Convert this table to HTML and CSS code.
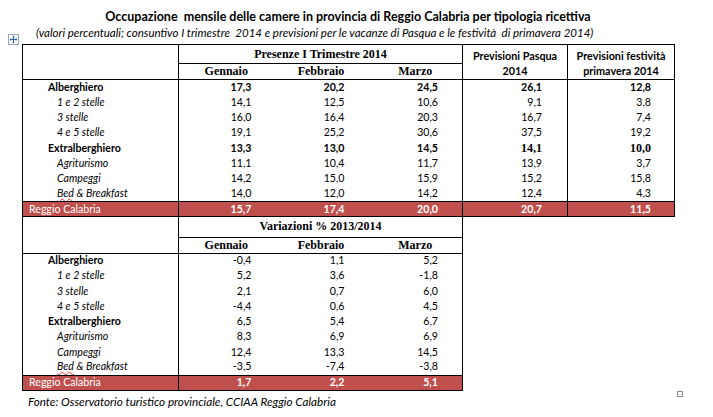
FILE: index.html
```html
<!DOCTYPE html>
<html lang="it">
<head>
<meta charset="utf-8">
<title>Occupazione mensile delle camere</title>
<link rel="stylesheet" href="styles.css">
</head>
<body>
<div class="page">
  <h1 class="title">Occupazione&nbsp; mensile delle camere in provincia di Reggio Calabria per tipologia ricettiva</h1>
  <p class="subtitle">(valori percentuali; consuntivo I trimestre&nbsp; 2014 e previsioni per le vacanze di Pasqua e le festività&nbsp; di primavera 2014)</p>
  <div class="tables">
    <span class="handle"><svg viewBox="0 0 11 11" width="11" height="11"><rect x="0.5" y="0.5" width="10" height="10" fill="#fff" stroke="#9aa6c0"/><path d="M5.5 2v7M2 5.5h7" stroke="#2f5fa8" stroke-width="1"/><path d="M5.5 1.6l-1.4 1.6h2.8zM5.5 9.4l-1.4-1.6h2.8zM1.6 5.5l1.6-1.4v2.8zM9.4 5.5l-1.6-1.4v2.8z" fill="#2f5fa8"/></svg></span>
    <table class="grid top">
      <colgroup><col class="c-lab"><col class="c-m1"><col class="c-m2"><col class="c-m3"><col class="c-p"><col class="c-f"></colgroup>
      <thead>
        <tr class="h1">
          <th rowspan="2" class="lab-h"></th>
          <th colspan="3" class="serif-h group">Presenze I Trimestre 2014</th>
          <th rowspan="2" class="sans-h vb">Previsioni Pasqua<br>2014</th>
          <th rowspan="2" class="sans-h vb">Previsioni festività<br>primavera 2014</th>
        </tr>
        <tr class="h2">
          <th class="serif-h">Gennaio</th>
          <th class="serif-h">Febbraio</th>
          <th class="serif-h">Marzo</th>
        </tr>
      </thead>
      <tbody>
        <tr class="b"><td class="lab cat">Alberghiero</td><td class="n g">17,3</td><td class="n">20,2</td><td class="n">24,5</td><td class="n vb">26,1</td><td class="n vb f">12,8</td></tr>
        <tr><td class="lab sub">1 e 2 stelle</td><td class="n g">14,1</td><td class="n">12,5</td><td class="n">10,6</td><td class="n vb">9,1</td><td class="n vb f">3,8</td></tr>
        <tr><td class="lab sub">3 stelle</td><td class="n g">16,0</td><td class="n">16,4</td><td class="n">20,3</td><td class="n vb">16,7</td><td class="n vb f">7,4</td></tr>
        <tr><td class="lab sub">4 e 5 stelle</td><td class="n g">19,1</td><td class="n">25,2</td><td class="n">30,6</td><td class="n vb">37,5</td><td class="n vb f">19,2</td></tr>
        <tr class="b"><td class="lab cat">Extralberghiero</td><td class="n g">13,3</td><td class="n">13,0</td><td class="n">14,5</td><td class="n vb serif">14,1</td><td class="n vb f serif">10,0</td></tr>
        <tr><td class="lab sub">Agriturismo</td><td class="n g">11,1</td><td class="n">10,4</td><td class="n">11,7</td><td class="n vb">13,9</td><td class="n vb f">3,7</td></tr>
        <tr><td class="lab sub">Campeggi</td><td class="n g">14,2</td><td class="n">15,0</td><td class="n">15,9</td><td class="n vb">15,2</td><td class="n vb f">15,8</td></tr>
        <tr class="last"><td class="lab sub"><span class="spell">Bed</span> &amp; Breakfast</td><td class="n g">14,0</td><td class="n">12,0</td><td class="n">14,2</td><td class="n vb">12,4</td><td class="n vb f">4,3</td></tr>
        <tr class="total"><td class="lab tot">Reggio Calabria</td><td class="n g">15,7</td><td class="n">17,4</td><td class="n">20,0</td><td class="n vb">20,7</td><td class="n vb f">11,5</td></tr>
      </tbody>
    </table>
    <table class="grid bottom">
      <colgroup><col class="c-lab"><col class="c-m1"><col class="c-m2"><col class="c-m3"></colgroup>
      <thead>
        <tr class="h1b">
          <th rowspan="2" class="lab-h"></th>
          <th colspan="3" class="serif-h group">Variazioni % 2013/2014</th>
        </tr>
        <tr class="h2b">
          <th class="serif-h">Gennaio</th>
          <th class="serif-h">Febbraio</th>
          <th class="serif-h">Marzo</th>
        </tr>
      </thead>
      <tbody>
        <tr><td class="lab cat">Alberghiero</td><td class="n g">-0,4</td><td class="n">1,1</td><td class="n">5,2</td></tr>
        <tr><td class="lab sub">1 e 2 stelle</td><td class="n g">5,2</td><td class="n">3,6</td><td class="n">-1,8</td></tr>
        <tr><td class="lab sub">3 stelle</td><td class="n g">2,1</td><td class="n">0,7</td><td class="n">6,0</td></tr>
        <tr><td class="lab sub">4 e 5 stelle</td><td class="n g">-4,4</td><td class="n">0,6</td><td class="n">4,5</td></tr>
        <tr><td class="lab cat">Extralberghiero</td><td class="n g">6,5</td><td class="n">5,4</td><td class="n">6,7</td></tr>
        <tr><td class="lab sub">Agriturismo</td><td class="n g">8,3</td><td class="n">6,9</td><td class="n">6,9</td></tr>
        <tr><td class="lab sub">Campeggi</td><td class="n g">12,4</td><td class="n">13,3</td><td class="n">14,5</td></tr>
        <tr class="last"><td class="lab sub"><span class="spell">Bed</span> &amp; Breakfast</td><td class="n g">-3,5</td><td class="n">-7,4</td><td class="n">-3,8</td></tr>
        <tr class="total"><td class="lab tot">Reggio Calabria</td><td class="n g">1,7</td><td class="n">2,2</td><td class="n">5,1</td></tr>
      </tbody>
    </table>
    <span class="corner"></span>
  </div>
  <p class="source">Fonte: Osservatorio turistico provinciale, CCIAA Reggio Calabria</p>
</div>
</body>
</html>
```
FILE: styles.css
```css
* { box-sizing: border-box; }
html, body { margin: 0; padding: 0; background: #fff; }
body {
  font-family: "Lato", "Liberation Sans", sans-serif;
  color: #000;
  width: 713px;
  height: 417px;
  overflow: hidden;
}
.page { position: relative; }

.title {
  margin: 9px 0 0 22px;
  width: 652px;
  text-align: center;
  font-size: 12.5px;
  font-weight: 700;
  line-height: 15px;
  white-space: pre;
}
.subtitle {
  margin: 1px 0 0 36px;
  font-size: 11.5px;
  font-style: italic;
  line-height: 15px;
  white-space: nowrap;
}

.tables { position: relative; margin: 4px 0 0 22px; }

.handle {
  position: absolute;
  left: -14px;
  top: -10px;
  width: 11px;
  height: 11px;
  line-height: 0;
}
.corner {
  position: absolute;
  left: 655px;
  top: 347px;
  width: 6px;
  height: 6px;
  border: 1px solid #8a8a8a;
  background: #fff;
}

.grid {
  border-collapse: collapse;
  table-layout: fixed;
  font-size: 10.6px;
}
.grid.top { width: 652px; border: 1px solid #000; }
.grid.bottom { width: 440px; border: 1px solid #000; border-top: 0; }

.c-lab { width: 156px; }
.c-m1 { width: 95px; }
.c-m2 { width: 95px; }
.c-m3 { width: 94px; }
.c-p { width: 105px; }
.c-f { width: 107px; }

th, td { padding: 0; white-space: nowrap; overflow: hidden; }

.lab-h { border-right: 1px solid #000; border-bottom: 1px solid #000; }
.serif-h {
  font-family: "Liberation Serif", "Times New Roman", serif;
  font-weight: 700;
  font-size: 12px;
  text-align: center;
  border-bottom: 1px solid #000;
}
.group { border-bottom: 1px solid #000; }
.sans-h {
  font-weight: 700;
  font-size: 10.8px;
  line-height: 15px;
  text-align: center;
  vertical-align: middle;
  border-bottom: 1px solid #000;
  padding-top: 1px;
}
.vb { border-left: 1px solid #000; }

.h1 { height: 19px; }
.h2 { height: 16px; }
.h1b { height: 20px; }
.h2b { height: 16px; }

tbody tr { height: 15.25px; }
tbody td { line-height: 13px; }

.lab { border-right: 1px solid #000; }
.cat { font-weight: 700; padding-left: 25px; }
.sub { font-style: italic; padding-left: 34px; }
.tot { padding-left: 6px; }

.n { text-align: right; padding-right: 24px; }
.n.g { padding-right: 22px; }
.n.vb { padding-right: 25px; }
.n.f { padding-right: 23px; }
.b .n { font-weight: 700; }
.serif {
  font-family: "Liberation Serif", "Times New Roman", serif;
  font-size: 12px;
}

.last td { padding-bottom: 1px; }

.total { height: 15px; }
.total td {
  background: #c0504d;
  color: #fff;
  border-top: 1px solid #000;
  border-bottom: 1px solid #000;
}
.total .n { font-weight: 700; }

.spell {
  text-decoration: underline wavy #e03030;
  text-decoration-thickness: 1px;
  text-underline-offset: 1px;
}

.source {
  margin: 3px 0 0 28px;
  font-size: 11.7px;
  font-style: italic;
  line-height: 15px;
}
```
